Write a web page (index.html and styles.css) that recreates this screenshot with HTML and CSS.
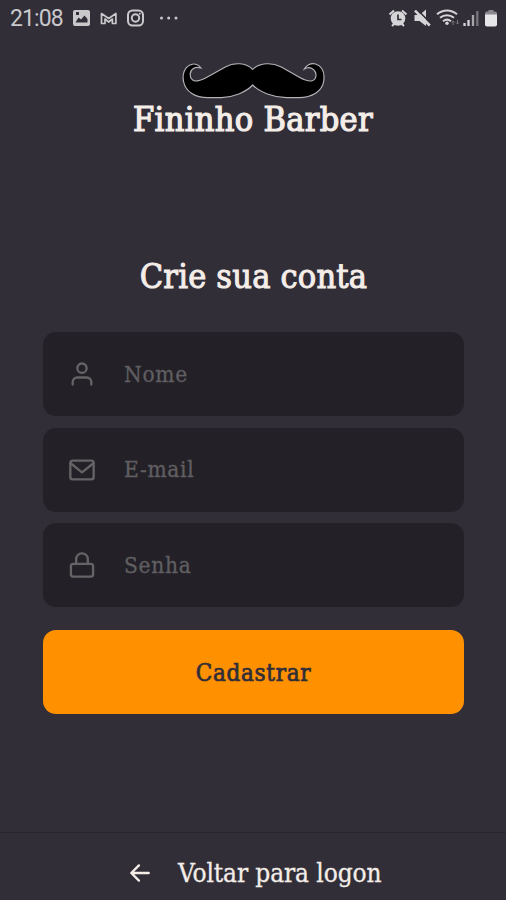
FILE: index.html
```html
<!DOCTYPE html>
<html lang="pt-BR">
<head>
<meta charset="utf-8">
<title>Fininho Barber</title>
<link rel="stylesheet" href="styles.css">
</head>
<body>
<div class="screen">
  <header class="status">
    <span class="clock">21:08</span>
    <svg class="notifications" width="108" height="24" viewBox="0 0 108 24" fill="none" stroke="#c9c8cb" stroke-width="2">
      <path fill="#c9c8cb" stroke="none" fill-rule="evenodd" d="M3 4h13a2 2 0 0 1 2 2v12a2 2 0 0 1-2 2H3a2 2 0 0 1-2-2V6a2 2 0 0 1 2-2zM3.500 16.500h12v-3.500l-3-3.500-3.500 4-2.500-2zM4 6v3h3V6z"/>
      <path d="M29.500 17.500V7.500l7.200 5 7.200-5v10h-3.500v-4.500l-3.700 3-3.700-3v4.500z" stroke-width="1.700" stroke-linejoin="round"/>
      <rect x="56" y="4.500" width="15" height="15" rx="4.500"/>
      <circle cx="63.500" cy="12" r="3.700"/>
      <g fill="#c9c8cb" stroke="none"><circle cx="67.800" cy="7.700" r="1"/><circle cx="89.500" cy="12" r="1.500"/><circle cx="96.700" cy="12" r="1.500"/><circle cx="104" cy="12" r="1.500"/></g>
    </svg>
    <svg class="system" width="112" height="24" viewBox="0 0 112 24" fill="none" stroke="#d5d4d7" stroke-width="2">
      <circle cx="11" cy="12.500" r="7.300" fill="#d5d4d7" stroke="none"/>
      <path d="M2.500 8.500l4.500-4M19.500 8.500l-4.500-4M5 20l2.500-2.500M17 20l-2.500-2.500"/>
      <path d="M11 8.500v5h3.500" stroke="#312e38" stroke-width="1.700"/>
      <path d="M27.500 9h5l6.500-5.500v16.500l-6.500-5h-5z" fill="#d5d4d7" stroke="none"/>
      <path d="M30 3.500L44.500 18" stroke="#312e38" stroke-width="1.700"/><path d="M28 4.700L42.800 19.500" stroke-width="2.600"/>
      <path d="M50 8.200c6-5 14-5 20 0M53 11.800c4.200-3.500 9.800-3.500 14 0M56 15.200c2.500-2 5.500-2 8 0"/>
      <circle cx="60" cy="17.200" r="1.700" fill="#d5d4d7" stroke="none"/>
      <path d="M66 19v-4m-1.500 1.500L66 15l1.500 1.500M70.500 14v4m-1.500-1.500l1.500 1.500 1.500-1.500" stroke="#74727a" stroke-width="1"/>
      <path d="M77.500 20v-3M81.500 20v-6" stroke-width="2.300"/><path d="M86 20V9" stroke="#a7a5aa" stroke-width="2.300"/><path d="M90.300 20V5" stroke="#77757c" stroke-width="2.300"/>
      <path d="M98 7.500a2 2 0 0 1 2-2h1.500V4h5v1.500h1.500a2 2 0 0 1 2 2V9H98z" fill="#8b898f" stroke="none"/><path d="M98 8.500h12V18.500a2 2 0 0 1-2 2h-8a2 2 0 0 1-2-2z" fill="#e6e5e7" stroke="none"/>
    </svg>
  </header>

  <div class="brand">
    <svg class="moustache" width="144" height="38" viewBox="169 20 432 114">
      <path d="M384 45C365 25 328 23 302 38L244 70Q225 80 211 80C193 75 193 51 205 43Q216 36 229 41C223 31 210 26 198 31C178 39 172 62 177 83C183 112 212 130 249 130H291C328 128 365 113 384 92C405 114 447 129 485 130H523C562 130 592 111 597 82C601 56 593 36 573 29C557 25 544 34 539 44Q551 36 563 43C579 54 577 76 560 80Q545 81 524 69L470 38C440 23 406 25 384 45Z" fill="#000" stroke="#b4b2b7" stroke-width="3.500"/>
    </svg>
    <span class="slab wordmark">Fininho Barber</span>
  </div>

  <main class="form">
    <h1 class="slab title">Crie sua conta</h1>
    <div class="field">
      <svg class="icon" viewBox="0 0 24 24"><path d="M20 21v-2a4 4 0 0 0-4-4H8a4 4 0 0 0-4 4v2"/><circle cx="12" cy="7" r="4"/></svg>
      <span class="slab hint">Nome</span>
    </div>
    <div class="field">
      <svg class="icon" viewBox="0 0 24 24"><path d="M4 4h16c1.100 0 2 .9 2 2v12c0 1.100-.9 2-2 2H4c-1.100 0-2-.9-2-2V6c0-1.100.9-2 2-2z"/><path d="M22 6l-10 8L2 6"/></svg>
      <span class="slab hint">E-mail</span>
    </div>
    <div class="field">
      <svg class="icon" viewBox="0 0 24 24"><rect x="2.500" y="11" width="19" height="11" rx="2"/><path d="M7 11V7a5 5 0 0 1 10 0v4"/></svg>
      <span class="slab hint">Senha</span>
    </div>
    <div class="submit"><span class="slab submit-label">Cadastrar</span></div>
  </main>

  <footer class="back">
    <svg class="arrow" viewBox="0 0 24 24"><path d="M20 12H4M11 19l-7-7 7-7"/></svg>
    <span class="slab back-label">Voltar para logon</span>
  </footer>
</div>
</body>
</html>
```
FILE: styles.css
```css
* { box-sizing: border-box; }
body { margin: 0; background: #312e38; }
.screen { width: 506px; height: 900px; display: flex; flex-direction: column; overflow: hidden; background: #312e38; }

.status { height: 61px; display: flex; align-items: flex-start; padding: 6px 7px 0 10px; }
.clock { width: 62px; font: 23px/26px Roboto, sans-serif; letter-spacing: -0.900px; color: #c9c8cb; }
.system { margin-left: auto; }

.slab { display: block; white-space: nowrap; font-family: "Roboto Slab", "DejaVu Serif Condensed", "DejaVu Serif", serif; font-stretch: condensed; color: #f4ede8; }

.brand { display: flex; flex-direction: column; align-items: center; }
.moustache { display: block; }
.wordmark { font-size: 34px; line-height: 40px; letter-spacing: 0.300px; -webkit-text-stroke: 1.200px #f4ede8; }

.form { padding: 114px 42px 0 43px; display: flex; flex-direction: column; }
.title { align-self: center; margin: 0 0 33px; font-size: 34px; line-height: 46px; font-weight: 400; letter-spacing: 0.200px; -webkit-text-stroke: 1px #f4ede8; }
.field { height: 84px; margin-bottom: 11.500px; padding-left: 25px; display: flex; align-items: center; border-radius: 13px; background: #232127; }
.icon { width: 28px; height: 28px; flex: none; margin-right: 28px; fill: none; stroke: #666366; stroke-width: 2; stroke-linecap: round; stroke-linejoin: round; }
.hint { padding-bottom: 1px; font-size: 22.500px; line-height: 30px; letter-spacing: 0.700px; color: #605e61; -webkit-text-stroke: 0.300px #605e61; }
.submit { height: 84px; margin-top: 11px; display: flex; align-items: center; justify-content: center; border-radius: 13px; background: #ff9000; }
.submit-label { padding-top: 3px; font-size: 24px; line-height: 32px; letter-spacing: 0.700px; color: #312e38; -webkit-text-stroke: 0.700px #312e38; }

.back { height: 68px; margin-top: auto; padding: 12px 0 0 127px; display: flex; align-items: center; border-top: 1px solid #29262f; }
.arrow { width: 26px; height: 26px; margin-right: 25px; fill: none; stroke: #f4ede8; stroke-width: 2.200; stroke-linecap: round; stroke-linejoin: round; }
.back-label { font-size: 26px; line-height: 34px; letter-spacing: -0.100px; -webkit-text-stroke: 0.300px #f4ede8; }
```
